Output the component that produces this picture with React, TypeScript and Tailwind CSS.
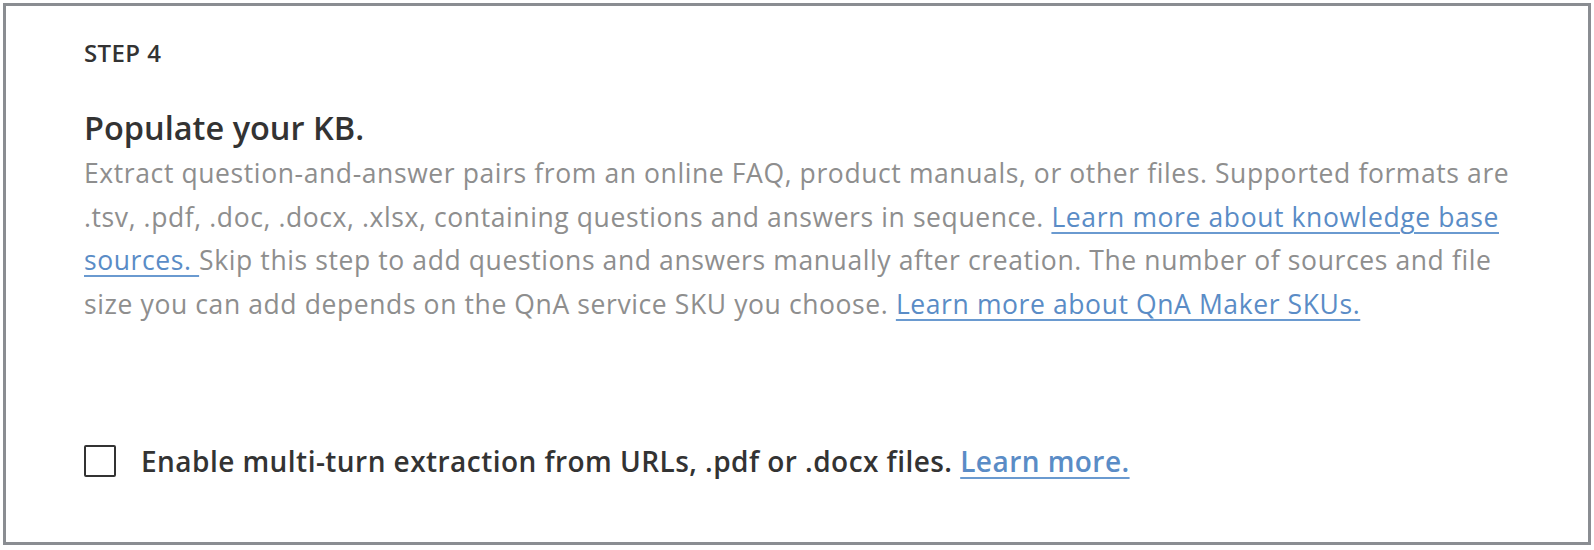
const Link = (props: { children: React.ReactNode }) => (
  <a
    href="#"
    className="text-[#5a8cc6] underline decoration-[#6a9ad0] decoration-[2px] underline-offset-[5px]"
  >
    {props.children}
  </a>
)

const App = () => (
  <div className="w-[1594px] h-[550px] bg-white p-[3px] font-['Open_Sans',sans-serif]">
    <div className="h-[542px] border-[3px] border-[#8a8d92] bg-white pl-[78px] pt-[31px]">
      <div className="text-[24px] leading-[32px] font-semibold text-[#333] tracking-[0.4px]">STEP 4</div>
      <h2 className="mt-[39px] text-[32.5px] leading-[40px] font-semibold text-[#333]">
        Populate your KB.
      </h2>
      <p className="mt-[4px] w-[1500px] text-[26.5px] leading-[43.7px] text-[#8e8e8e] tracking-[0.6px]">
        Extract question-and-answer pairs from an online FAQ, product manuals, or other files. Supported formats are
        <br />
        .tsv, .pdf, .doc, .docx, .xlsx, containing questions and answers in sequence.{" "}
        <Link>Learn more about knowledge base</Link>
        <br />
        <Link>sources. </Link>Skip this step to add questions and answers manually after creation. The number of sources and file
        <br />
        size you can add depends on the QnA service SKU you choose. <Link>Learn more about QnA Maker SKUs.</Link>
      </p>
      <label className="mt-[114px] flex items-center gap-[25px]">
        <span className="w-[32px] h-[32px] border-[2px] border-[#333] rounded-[2px] bg-white" />
        <span className="text-[28px] leading-[40px] font-semibold text-[#333] tracking-[0.45px]">
          Enable multi-turn extraction from URLs, .pdf or .docx files. <Link>Learn more.</Link>
        </span>
      </label>
    </div>
  </div>
)

export default App
